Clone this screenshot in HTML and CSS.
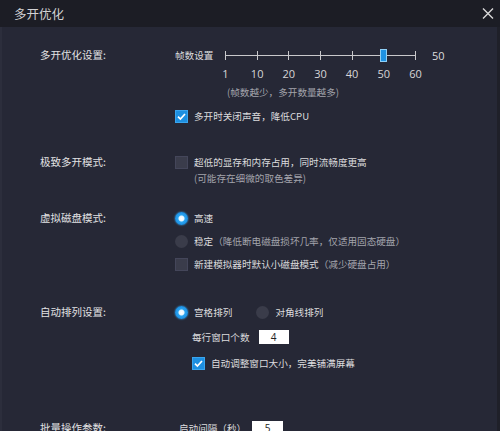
FILE: index.html
```html
<!DOCTYPE html>
<html lang="zh-CN">
<head>
<meta charset="utf-8">
<title>多开优化</title>
<link rel="stylesheet" href="styles.css">
</head>
<body>
<div class="window">
  <header class="titlebar">
    <span class="title">多开优化</span>
    <svg class="close" width="12" height="11" viewBox="0 0 12 11"><path d="M1 0.5L11 10.5M11 0.5L1 10.5" stroke="#d9d9d9" stroke-width="1.4" fill="none"/></svg>
  </header>
  <main class="content">
    <section class="row row-1">
      <div class="label">多开优化设置:</div>
      <div class="opts">
        <div class="slider-row">
          <span class="slider-name">帧数设置</span>
          <div class="track">
            <div class="ticks"><i></i><i></i><i></i><i></i><i></i><i></i><i></i></div>
            <div class="handle"></div>
          </div>
          <span class="slider-val">50</span>
        </div>
        <div class="scale">
          <span><b>1</b></span><span><b>10</b></span><span><b>20</b></span><span><b>30</b></span><span><b>40</b></span><span><b>50</b></span><span><b>60</b></span>
        </div>
        <div class="line hint slider-hint">(帧数越少，多开数量越多)</div>
        <div class="line check-line">
          <span class="cb checked"><svg width="13" height="13" viewBox="0 0 13 13"><path d="M3 6.6L5.4 9L10 4" stroke="#fff" stroke-width="1.7" fill="none"/></svg></span>
          <span>多开时关闭声音，降低CPU</span>
        </div>
      </div>
    </section>

    <section class="row row-2">
      <div class="label">极致多开模式:</div>
      <div class="opts">
        <div class="line">
          <span class="cb"></span>
          <span>超低的显存和内存占用，同时流畅度更高</span>
        </div>
        <div class="line hint indent">(可能存在细微的取色差异)</div>
      </div>
    </section>

    <section class="row row-3">
      <div class="label">虚拟磁盘模式:</div>
      <div class="opts gap7">
        <div class="line">
          <span class="radio on"></span>
          <span>高速</span>
        </div>
        <div class="line">
          <span class="radio"></span>
          <span>稳定<span class="hint">（降低断电磁盘损坏几率，仅适用固态硬盘）</span></span>
        </div>
        <div class="line">
          <span class="cb"></span>
          <span>新建模拟器时默认小磁盘模式<span class="hint">（减少硬盘占用）</span></span>
        </div>
      </div>
    </section>

    <section class="row row-4">
      <div class="label">自动排列设置:</div>
      <div class="opts">
        <div class="line">
          <span class="radio on"></span>
          <span>宫格排列</span>
          <span class="radio second"></span>
          <span>对角线排列</span>
        </div>
        <div class="line sub per-row">
          <span>每行窗口个数</span>
          <span class="num-box">4</span>
        </div>
        <div class="line sub auto-fit">
          <span class="cb checked"><svg width="13" height="13" viewBox="0 0 13 13"><path d="M3 6.6L5.4 9L10 4" stroke="#fff" stroke-width="1.7" fill="none"/></svg></span>
          <span>自动调整窗口大小，完美铺满屏幕</span>
        </div>
      </div>
    </section>

    <section class="row row-5">
      <div class="label">批量操作参数:</div>
      <div class="opts">
        <div class="line interval">
          <span>启动间隔（秒）</span>
          <span class="num-box">5</span>
        </div>
      </div>
    </section>
  </main>
</div>
</body>
</html>
```

FILE: styles.css
```css
html, body {
  margin: 0;
  padding: 0;
  background: #262836;
}

body {
  width: 500px;
  height: 431px;
  overflow: hidden;
  font-family: "Noto Sans CJK SC", "Noto Sans", sans-serif;
}

.window {
  width: 500px;
  height: 431px;
  display: flex;
  flex-direction: column;
  overflow: hidden;
}

.titlebar {
  height: 27px;
  flex: none;
  background: #1c1d25;
  display: flex;
  align-items: center;
  justify-content: space-between;
  padding: 0 6px 0 14px;
}

.title {
  font-size: 12.5px;
  color: #d2d2d4;
  line-height: 16px;
}

.close {
  display: block;
  margin-right: 0;
}

.content {
  flex: 1;
  padding: 18px 0 0 38px;
  border-left: 2px solid #2c2e3c;
  border-right: 3px solid #1f2029;
  color: #dcdcde;
  font-size: 9.6px;
}

.row {
  display: flex;
}

.label {
  width: 135px;
  flex: none;
  font-size: 10.5px;
  line-height: 16px;
  color: #e2e2e4;
}

.opts {
  display: flex;
  flex-direction: column;
}

.gap7 {
  gap: 7px;
}

.line {
  height: 16px;
  display: flex;
  align-items: center;
  white-space: nowrap;
}

.hint {
  color: #a3a4ac;
}

.indent {
  padding-left: 19px;
}

/* row 1 */
.row-1 .label {
  line-height: 20px;
}

.slider-row {
  height: 20px;
  display: flex;
  align-items: center;
}

.slider-name {
  width: 50px;
  font-size: 9.6px;
  color: #dcdcde;
}

.track {
  position: relative;
  width: 191px;
  height: 20px;
}

.track::before {
  content: "";
  position: absolute;
  left: 0;
  right: 0;
  top: 10px;
  height: 1px;
  background: #c9c9cc;
}

.ticks {
  height: 100%;
  display: flex;
  justify-content: space-between;
  align-items: center;
}

.ticks i {
  display: block;
  width: 1px;
  height: 9px;
  margin-top: 1px;
  background: #c9c9cc;
}

.handle {
  position: absolute;
  left: 155px;
  top: 4px;
  width: 5px;
  height: 11px;
  background: #1e92e3;
  border: 1px solid #8fd0f7;
}

.slider-val {
  margin-left: 16px;
  font-family: "Open Sans", "Noto Sans", sans-serif;
  font-size: 11px;
  color: #dcdcde;
}

.scale {
  height: 16px;
  width: 191px;
  margin-left: 50px;
  display: flex;
  justify-content: space-between;
  align-items: center;
}

.scale span {
  width: 1px;
  display: flex;
  justify-content: center;
}

.scale b {
  font-weight: normal;
  font-family: "Open Sans", "Noto Sans", sans-serif;
  font-size: 11px;
  color: #d6d6d8;
  white-space: nowrap;
}

.slider-hint {
  margin-top: 3px;
  padding-left: 52px;
}

.check-line {
  margin-top: 8px;
}

/* controls */
.cb {
  width: 13px;
  height: 13px;
  box-sizing: border-box;
  background: #3a3c4b;
  border: 1px solid #44465a;
  margin-right: 6px;
  flex: none;
  display: flex;
}

.cb.checked {
  background: #1d8fe0;
  border-color: #3aa5ee;
}

.cb svg {
  display: block;
  margin: -1px;
}

.radio {
  width: 13px;
  height: 13px;
  border-radius: 50%;
  background: #3a3c4a;
  margin-right: 6px;
  flex: none;
}

.radio.on {
  background: radial-gradient(circle, #ffffff 0, #e6f6ff 2.5px, #2aa4f0 3.5px, #1b8ee2 6.5px);
  box-shadow: 0 0 2px 0 #3cb2ff;
}

.radio.second {
  margin-left: 24px;
}

/* row spacing */
.row-2 {
  margin-top: 30px;
}

.row-3 {
  margin-top: 24px;
}

.row-4 {
  margin-top: 32px;
}

.row-5 {
  margin-top: 49px;
}

.sub {
  padding-left: 17px;
}

.per-row {
  margin-top: 9px;
}

.auto-fit {
  margin-top: 10px;
}

.num-box {
  width: 30px;
  height: 14px;
  background: #ffffff;
  color: #222;
  font-family: "Open Sans", "Noto Sans", sans-serif;
  font-size: 10px;
  line-height: 14px;
  text-align: center;
  margin-left: 9px;
}

.interval {
  padding-left: 4px;
}

.interval .num-box {
  margin-left: 6px;
  width: 31px;
}
```
